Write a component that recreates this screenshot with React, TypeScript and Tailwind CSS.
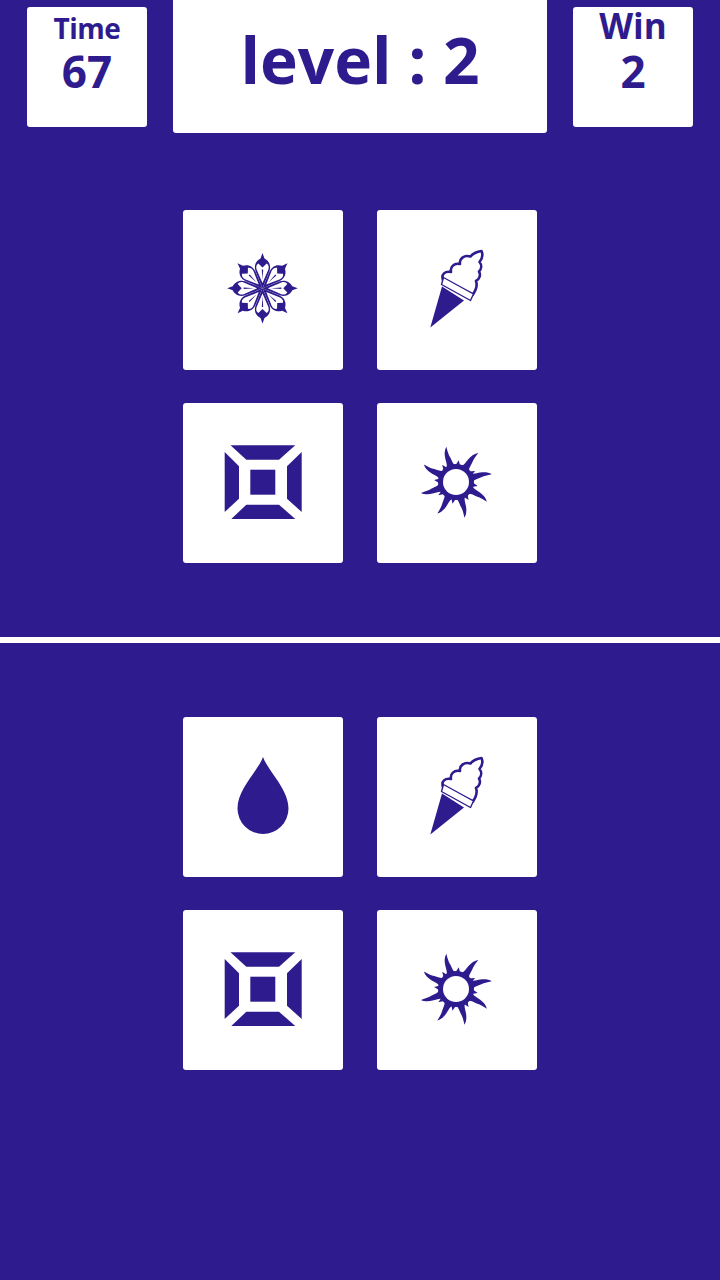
const INK = "#2e1c8e";

function SnowflakeIcon() {
  return (
    <svg viewBox="0 0 100 100" className="h-[100px] w-[100px]">
      {[0, 45, 90, 135, 180, 225, 270, 315].map((angle) => (
        <g key={angle} transform={`rotate(${angle} 49.5 48.3)`}>
          <path d="M49.5 48.3L42.5 31C40.5 25 43.5 20.5 47.5 18.5L49.5 13L51.5 18.5C55.5 20.5 58.5 25 56.5 31Z" fill={INK} />
          <path d="M49.5 43L43.6 29.5C42.6 26.5 43.6 24.5 45.3 23.5L49.5 27.5L53.7 23.5C55.4 24.5 56.4 26.5 55.4 29.5Z" fill="#fff" />
          <path d="M49.5 40L48.8 29.5H50.2Z" fill={INK} />
        </g>
      ))}
    </svg>
  );
}

function ConeIcon() {
  return (
    <svg viewBox="0 0 100 100" className="h-[100px] w-[100px]">
      <path d="M23.3 87.5L35 46.5L57 60.5Z" fill={INK} />
      <path
        d="M36 40C34 34 38 31 44 32C43 27 47 22.5 53 24C52 19 57 14.5 63.5 16.5C65 14 70 11.5 74.5 11C76 14.5 75 19 72.5 22C75 25 74.5 29 72 31.5C74 35 72.5 39 69 41C70.5 45 69 50 66 54.5Z"
        fill="#fff"
        stroke={INK}
        strokeWidth="2.6"
        strokeLinejoin="round"
      />
      <path d="M36.5 37.5L66.5 54L63.5 60.5L34.5 44.5Z" fill="#fff" stroke={INK} strokeWidth="1.4" strokeLinejoin="round" />
    </svg>
  );
}

function FrameIcon() {
  return (
    <svg viewBox="0 0 100 100" className="h-[100px] w-[100px]">
      <g fill={INK}>
        <path d="M17.5 12.3H82.3L66 26.7H33.3Z" />
        <path d="M11.7 19L26 33.3V65.7L11.7 79Z" />
        <path d="M88.7 19L74 33.3V65.7L88.7 79Z" />
        <path d="M33.3 71.7H66L82.3 86H18.3Z" />
        <path d="M37.3 36.7H62.3V61.7H37.3Z" />
      </g>
    </svg>
  );
}

// ray tips in the picture are not evenly spaced, so the angles are listed
const SUN_RAYS = [-20, 33, 73, 118, 162, 206, 248, 294];

function SunIcon() {
  return (
    <svg viewBox="0 0 100 100" className="h-[100px] w-[100px]">
      <g fill={INK}>
        {SUN_RAYS.map((angle) => (
          <g key={angle}>
            <path
              transform={`rotate(${angle} 49 49)`}
              d="M44.5 33.5C47 30 46.5 26.5 47 23C47.5 19 49 15 52 12.5C51.5 17 51.3 21 52 24C52.6 28 52 31 54.5 33.5Z"
            />
            <path transform={`rotate(${angle + 26} 49 49)`} d="M46.5 33L49.5 27L51.5 33Z" />
          </g>
        ))}
        <circle cx="49" cy="49" r="18" />
      </g>
      <circle cx="49" cy="49" r="13" fill="#fff" />
    </svg>
  );
}

function DropIcon() {
  return (
    <svg viewBox="0 0 100 100" className="h-[100px] w-[100px]">
      <path d="M50 10C45 24 24.5 42 24.5 61.5A25.5 25.5 0 0 0 75.5 61.5C75.5 42 55 24 50 10Z" fill={INK} />
    </svg>
  );
}

function Tile({ children }: { children: React.ReactNode }) {
  return <div className="flex h-40 w-40 items-center justify-center rounded-[3px] bg-white">{children}</div>;
}

function Board({ first }: { first: React.ReactNode }) {
  return (
    <div className="mx-auto grid w-[354px] grid-cols-[160px_160px] gap-x-[34px] gap-y-[33px]">
      <Tile>{first}</Tile>
      <Tile>
        <ConeIcon />
      </Tile>
      <Tile>
        <FrameIcon />
      </Tile>
      <Tile>
        <SunIcon />
      </Tile>
    </div>
  );
}

function StatBox({ label, value, labelClass }: { label: string; value: string; labelClass: string }) {
  return (
    <div className="mt-[7px] flex h-[120px] w-[120px] flex-col items-center rounded-[3px] bg-white font-bold">
      <div className={labelClass}>{label}</div>
      <div className="h-[44px] text-[44px] leading-[44px]">{value}</div>
    </div>
  );
}

export default function App() {
  return (
    <div className="h-[1280px] w-[720px] overflow-hidden bg-[#2e1c8e] text-[#2e1c8e] [font-family:'Open_Sans',sans-serif]">
      <div className="flex h-[133px] items-start justify-between px-[27px]">
        <StatBox label="Time" value="67" labelClass="h-[42px] text-[28px] leading-[42px] tracking-[-0.5px]" />
        <div className="flex h-[133px] w-[374px] items-start justify-center rounded-b-[3px] bg-white pt-[18px] text-[64px] leading-[84px] font-bold">
          level : 2
        </div>
        <StatBox label="Win" value="2" labelClass="h-[42px] text-[35px] leading-[38px]" />
      </div>

      <div className="mt-[77px]">
        <Board first={<SnowflakeIcon />} />
      </div>

      <div className="mt-[74px] h-[6px] bg-white" />

      <div className="mt-[74px]">
        <Board first={<DropIcon />} />
      </div>
    </div>
  );
}
